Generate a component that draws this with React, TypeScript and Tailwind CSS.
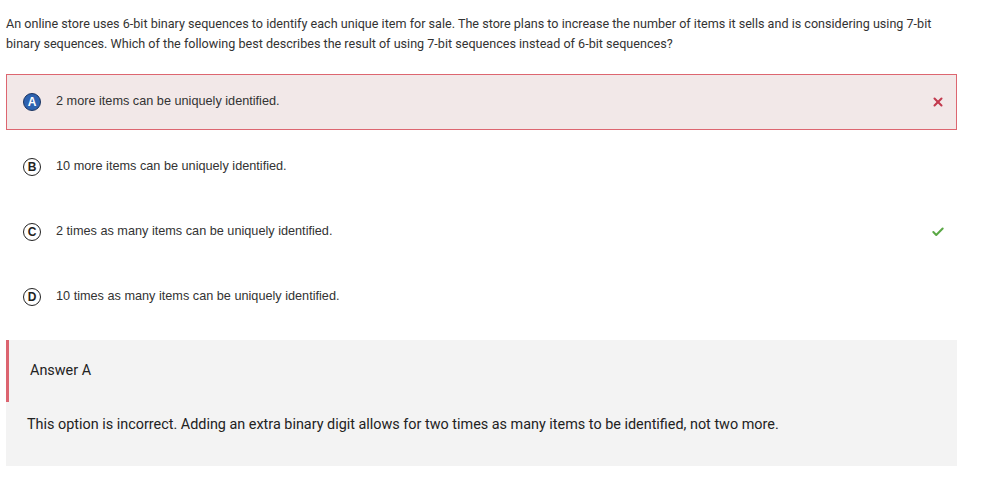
import { Check, X } from "lucide-react";

const options = [
  { letter: "A", text: "2 more items can be uniquely identified.", state: "wrong" },
  { letter: "B", text: "10 more items can be uniquely identified.", state: "" },
  { letter: "C", text: "2 times as many items can be uniquely identified.", state: "right" },
  { letter: "D", text: "10 times as many items can be uniquely identified.", state: "" },
];

const App = () => {
  return (
    <div className="w-[986px] h-[482px] bg-white pl-[6px] pr-[29px] pt-[14px]">
      <p className="font-['Roboto',sans-serif] text-[12.6px] leading-[20px] text-[#333] pr-[20px]">
        An online store uses 6-bit binary sequences to identify each unique item for sale. The store plans to increase the number of items it sells and is considering using 7-bit binary sequences. Which of the following best describes the result of using 7-bit sequences instead of 6-bit sequences?
      </p>

      <div className="mt-[20px] flex flex-col gap-[9px]">
        {options.map((o) => (
          <div
            key={o.letter}
            className={`h-[56px] flex items-center border ${
              o.state === "wrong" ? "bg-[#f2e8e8] border-[#dd6670]" : "border-transparent"
            }`}
          >
            <div className="w-[49px] flex justify-center pl-[1px]">
              {o.state === "wrong" ? (
                <span className="w-[18px] h-[18px] rounded-full bg-[#2d62b0] border border-[#1c3561] flex items-center justify-center text-white font-['Liberation_Sans',sans-serif] font-bold text-[12px]">
                  {o.letter}
                </span>
              ) : (
                <span className="w-[18px] h-[18px] rounded-full border-[1.5px] border-[#222] flex items-center justify-center text-[#222] font-['Liberation_Sans',sans-serif] font-bold text-[12px]">
                  {o.letter}
                </span>
              )}
            </div>
            <span className="flex-1 font-['Liberation_Sans',sans-serif] text-[12.7px] text-[#333]">
              {o.text}
            </span>
            <div className="w-[40px] flex justify-center pl-[4px]">
              {o.state === "wrong" && <X size={14} strokeWidth={3.5} className="text-[#c23a4e]" />}
              {o.state === "right" && <Check size={14} strokeWidth={3.5} className="text-[#5aa845]" />}
            </div>
          </div>
        ))}
      </div>

      <div className="mt-[15px] h-[126px] bg-[#f3f3f3] font-['Roboto',sans-serif]">
        <div className="h-[62px] border-l-[3px] border-[#dc6470] flex items-center pl-[21px] text-[14.4px] text-[#222]">
          Answer A
        </div>
        <p className="pl-[21px] pt-[12px] text-[14.4px] text-[#222]">
          This option is incorrect. Adding an extra binary digit allows for two times as many items to be identified, not two more.
        </p>
      </div>
    </div>
  );
};

export default App;
